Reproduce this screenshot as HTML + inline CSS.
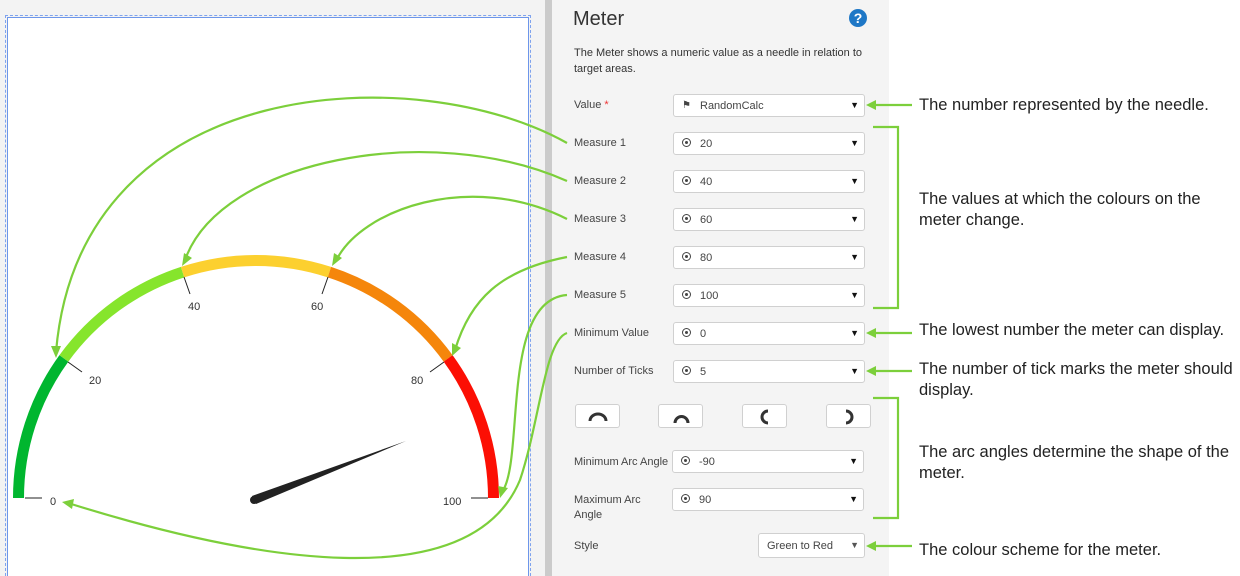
<!DOCTYPE html>
<html style="height:576px;overflow:hidden"><head><meta charset="utf-8"><style>
body{margin:0;width:1240px;height:576px;background:#fff;font-family:"Liberation Sans",sans-serif;position:relative;overflow:hidden}
.abs{position:absolute}
.lbl{position:absolute;left:574px;font-size:11px;color:#444}
.sel{position:absolute;left:673px;width:192px;height:23px;background:#fff;border:1px solid #d0d0d0;border-radius:3px;font-size:11px;color:#444;box-sizing:border-box}
.sel .ic{position:absolute;left:8px;top:5px;width:7px;height:7px;border:1.3px solid #444;border-radius:50%}
.sel .ic:after{content:"";position:absolute;left:2px;top:2px;width:3px;height:3px;background:#444;border-radius:50%}
.sel .t{position:absolute;left:26px;top:5px}
.sel .a{position:absolute;right:5px;top:5px;font-size:9px;color:#111}
.btn{position:absolute;top:404px;width:45px;height:24px;background:#fff;border:1px solid #d0d0d0;border-radius:3px;box-sizing:border-box}
.ann{position:absolute;left:919px;font-size:16.5px;color:#222;line-height:21px;white-space:nowrap}
</style></head><body>
<div class="abs" style="left:0;top:0;width:545px;height:576px;background:#f3f3f3"></div>
<div class="abs" style="left:5px;top:15px;width:526px;height:561px;border:1px dashed #7fa3ee;border-bottom:none;box-sizing:border-box"></div>
<div class="abs" style="left:7px;top:17px;width:522px;height:559px;border:1.5px solid #6d96ea;border-bottom:none;background:#fff;box-sizing:border-box"></div>
<div class="abs" style="left:545px;top:0;width:7px;height:576px;background:#cbcbcb"></div>
<div class="abs" style="left:552px;top:0;width:337px;height:576px;background:#f4f4f4"></div>
<div class="abs" style="left:573px;top:8px;font-size:20px;color:#333">Meter</div>
<div class="abs" style="left:849px;top:9px;width:18px;height:18px;border-radius:50%;background:#1e77c6;color:#fff;font-weight:bold;font-size:14px;text-align:center;line-height:18px">?</div>
<div class="abs" style="left:574px;top:45px;font-size:11px;color:#333;line-height:16px;width:300px">The Meter shows a numeric value as a needle in relation to<br>target areas.</div>
<div class="lbl" style="top:99px">Value <span style="color:#e33">*</span></div>
<div class="sel" style="top:94px"><span style="position:absolute;left:8px;top:5px;font-size:10px">&#9873;</span><span class="t">RandomCalc</span><span class="a">&#9660;</span></div>
<div class="lbl" style="top:137px">Measure 1</div><div class="sel" style="top:132px"><span class="ic"></span><span class="t">20</span><span class="a">&#9660;</span></div>
<div class="lbl" style="top:175px">Measure 2</div><div class="sel" style="top:170px"><span class="ic"></span><span class="t">40</span><span class="a">&#9660;</span></div>
<div class="lbl" style="top:213px">Measure 3</div><div class="sel" style="top:208px"><span class="ic"></span><span class="t">60</span><span class="a">&#9660;</span></div>
<div class="lbl" style="top:251px">Measure 4</div><div class="sel" style="top:246px"><span class="ic"></span><span class="t">80</span><span class="a">&#9660;</span></div>
<div class="lbl" style="top:289px">Measure 5</div><div class="sel" style="top:284px"><span class="ic"></span><span class="t">100</span><span class="a">&#9660;</span></div>
<div class="lbl" style="top:327px">Minimum Value</div><div class="sel" style="top:322px"><span class="ic"></span><span class="t">0</span><span class="a">&#9660;</span></div>
<div class="lbl" style="top:365px">Number of Ticks</div><div class="sel" style="top:360px"><span class="ic"></span><span class="t">5</span><span class="a">&#9660;</span></div>
<div class="btn" style="left:575px"></div><div class="btn" style="left:658px"></div><div class="btn" style="left:742px"></div><div class="btn" style="left:826px"></div>
<div class="lbl" style="top:456px">Minimum Arc Angle</div><div class="sel" style="top:450px;left:672px"><span class="ic"></span><span class="t">-90</span><span class="a">&#9660;</span></div>
<div class="lbl" style="top:493px;line-height:15px">Maximum Arc<br>Angle</div><div class="sel" style="top:488px;left:672px"><span class="ic"></span><span class="t">90</span><span class="a">&#9660;</span></div>
<div class="lbl" style="top:540px">Style</div>
<div class="sel" style="top:533px;left:758px;width:107px;height:25px"><span class="t" style="left:8px;top:6px">Green to Red</span><span class="a" style="top:6px;color:#555">&#9660;</span></div>
<div class="ann" style="top:95px">The number represented by the needle.</div>
<div class="ann" style="top:189px">The values at which the colours on the<br>meter change.</div>
<div class="ann" style="top:320px">The lowest number the meter can display.</div>
<div class="ann" style="top:359px">The number of tick marks the meter should<br>display.</div>
<div class="ann" style="top:442px">The arc angles determine the shape of the<br>meter.</div>
<div class="ann" style="top:540px">The colour scheme for the meter.</div>
<svg class="abs" style="left:0;top:0" width="1240" height="576" viewBox="0 0 1240 576">
<g fill="none" stroke-width="3" stroke="#333">
<path d="M590 421 a8 7 0 0 1 16 0"/>
<path d="M675 423 a6.5 6.5 0 1 1 13 0"/>
<path d="M768 423 a6 6 0 0 1 0 -12"/>
<path d="M846 411 a6 6 0 0 1 0 12"/>
</g>
<g fill="none" stroke-width="11">
<path d="M18.5 498 A237.5 237.5 0 0 1 63.9 358.4" stroke="#00b62f"/>
<path d="M63.9 358.4 A237.5 237.5 0 0 1 182.6 272.1" stroke="#86e52c"/>
<path d="M182.6 272.1 A237.5 237.5 0 0 1 329.4 272.1" stroke="#fcd02f"/>
<path d="M329.4 272.1 A237.5 237.5 0 0 1 448.1 358.4" stroke="#f5860b"/>
<path d="M448.1 358.4 A237.5 237.5 0 0 1 493.5 498" stroke="#fc0f04"/>
</g>
<g stroke="#222" stroke-width="1">
<path d="M25 498H42M68 362L82 372M184 277L190 294M328 277L322 294M444 362L430 372M488 498H471"/>
</g>
<g font-size="11" fill="#333" font-family="Liberation Sans">
<text x="50" y="505">0</text><text x="89" y="384">20</text><text x="188" y="310">40</text><text x="311" y="310">60</text><text x="411" y="384">80</text><text x="443" y="505">100</text>
</g>
<path d="M252 496 L406 441 L256 504 Z" fill="#222"/><circle cx="254" cy="500" r="4" fill="#222"/>
<g fill="none" stroke="#7ccf3b" stroke-width="2.2">
<path d="M567 143 C420 60 80 70 56 352"/>
<path d="M567 181 C430 120 220 160 185 260"/>
<path d="M567 219 C470 170 360 210 336 261"/>
<path d="M567 257 C500 270 470 300 455 350"/>
<path d="M567 295 C500 300 525 460 502 492"/>
<path d="M567 333 C545 340 540 420 520 480 C470 600 250 560 68 503"/>
<path d="M912 105H872M912 333H872M912 371H872M912 546H872"/>
<path d="M873 127H898V308H873M873 398H898V518H873"/>
</g>
<g fill="#7ccf3b">
<path d="M56 358 L51 346 L61 346Z"/>
<path d="M182 266 L184 253 L192 258Z"/>
<path d="M332 266 L334 253 L342 258Z"/>
<path d="M452 356 L452 343 L461 348Z"/>
<path d="M500 498 L498 486 L508 488Z"/>
<path d="M62 502 L74 499 L72 509Z"/>
<path d="M866 105L876 100V110Z"/><path d="M866 333L876 328V338Z"/><path d="M866 371L876 366V376Z"/><path d="M866 546L876 541V551Z"/>
</g>
</svg>
</body></html>
